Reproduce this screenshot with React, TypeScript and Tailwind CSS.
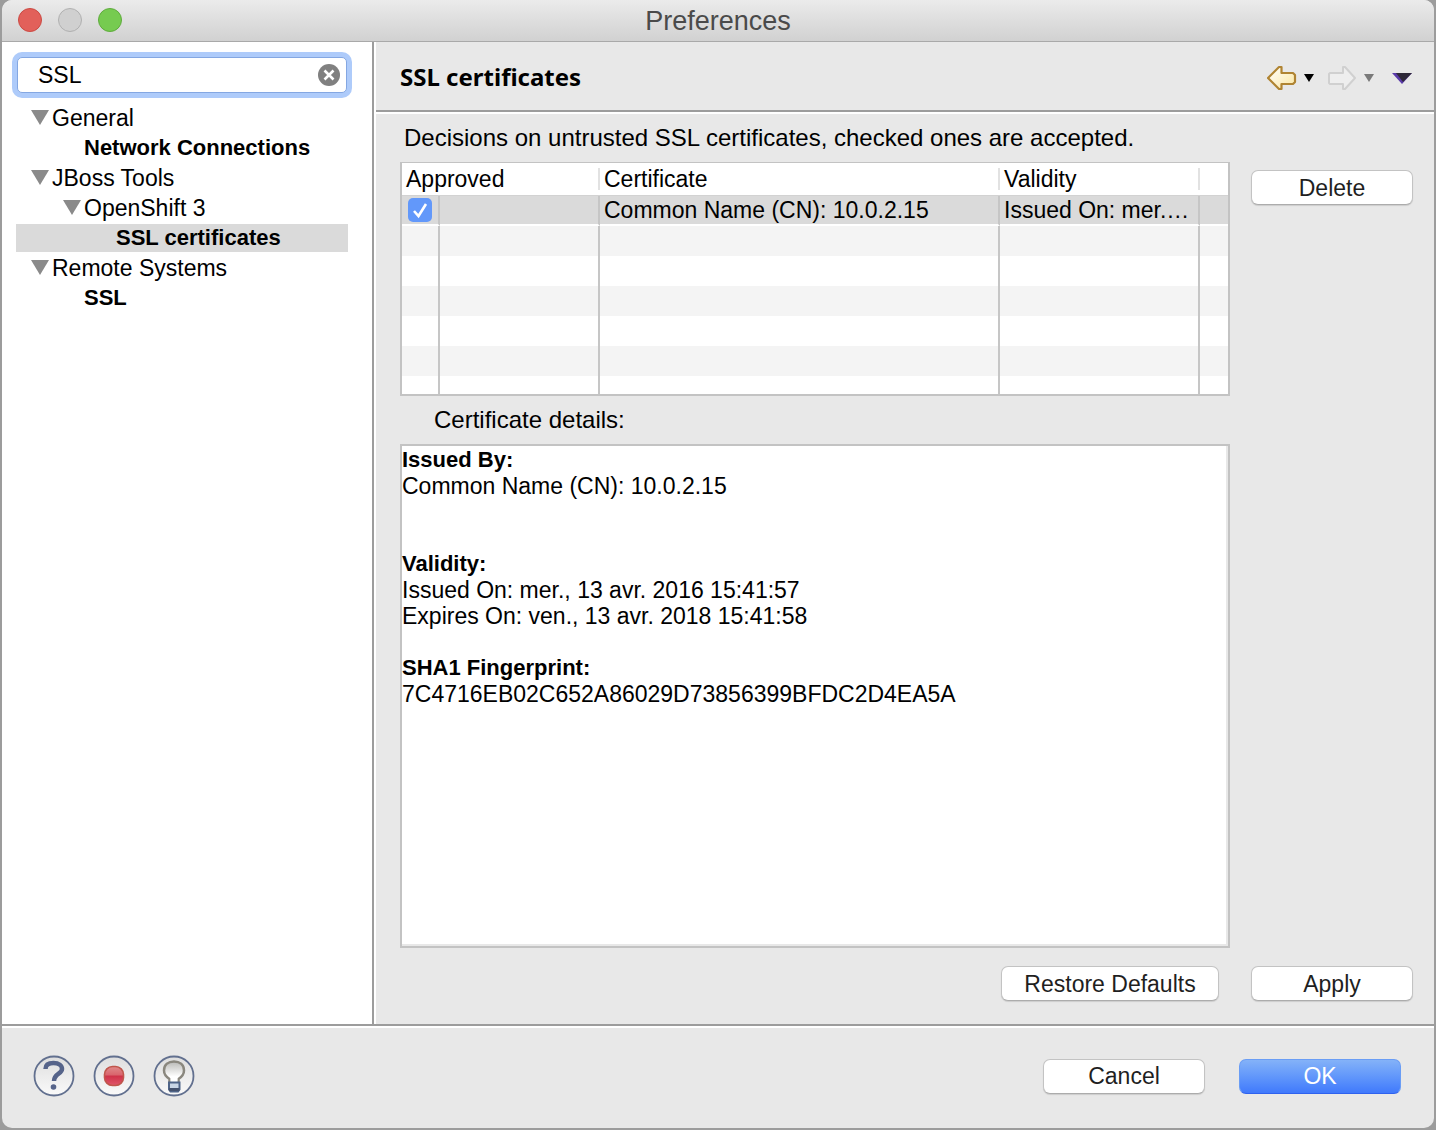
import type { ReactNode } from "react";

type TreeRow = { label: string; level: 0 | 1 | 2; branch?: boolean; selected?: boolean };

const tree: TreeRow[] = [
  { label: "General", level: 0, branch: true },
  { label: "Network Connections", level: 1 },
  { label: "JBoss Tools", level: 0, branch: true },
  { label: "OpenShift 3", level: 1, branch: true },
  { label: "SSL certificates", level: 2, selected: true },
  { label: "Remote Systems", level: 0, branch: true },
  { label: "SSL", level: 1 },
];

const indent = ["pl-[15px]", "pl-[47px]", "pl-[79px]"];

function TreeItem({ row }: { row: TreeRow }) {
  return (
    <li role="treeitem" aria-selected={!!row.selected} className="h-[30px] py-px">
      <div
        className={`flex h-7 items-center ${indent[row.level]} ${row.selected ? "bg-[#dadada]" : ""}`}
      >
        <span className="w-[21px] shrink-0">
          {row.branch && (
            <svg width="18" height="16" viewBox="0 0 18 16" className="block" aria-hidden="true">
              <path d="M0 0H18L9 15Z" fill="#8a8a8a" />
            </svg>
          )}
        </span>
        <span className={row.branch ? "" : "text-[22px] font-bold"}>{row.label}</span>
      </div>
    </li>
  );
}

function PushButton({ children, className = "" }: { children: ReactNode; className?: string }) {
  return (
    <button
      type="button"
      className={`h-[35px] rounded-[7px] border border-[#c3c3c3] border-b-[#acacac] bg-white text-[#1f1f1f] shadow-[0_1px_1px_rgba(0,0,0,0.12)] ${className}`}
    >
      {children}
    </button>
  );
}

function SmallTriangle({ color }: { color: string }) {
  return (
    <svg width="10" height="8" viewBox="0 0 10 8" className="block" aria-hidden="true">
      <path d="M0 0H10L5 8Z" fill={color} />
    </svg>
  );
}

function RoundIcon({ label, children }: { label: string; children?: ReactNode }) {
  return (
    <button type="button" aria-label={label} className="block">
      <svg width="42" height="42" viewBox="0 0 42 42" className="block">
        <defs>
          <linearGradient id="disc" x1="0" y1="0" x2="0" y2="1">
            <stop offset="0" stopColor="#dedede" />
            <stop offset="1" stopColor="#fafafa" />
          </linearGradient>
          <linearGradient id="rec" x1="0" y1="0" x2="0" y2="1">
            <stop offset="0" stopColor="#e08a8a" />
            <stop offset="0.45" stopColor="#d9646c" />
            <stop offset="0.5" stopColor="#cf3248" />
            <stop offset="1" stopColor="#e0566a" />
          </linearGradient>
          <linearGradient id="bulb" x1="0" y1="0" x2="0" y2="1">
            <stop offset="0" stopColor="#b9b9b6" />
            <stop offset="0.7" stopColor="#ffffff" />
          </linearGradient>
        </defs>
        <circle cx="21" cy="21" r="19.5" fill="url(#disc)" stroke="#62708f" strokeWidth="1.8" />
        {children}
      </svg>
    </button>
  );
}

export default function App() {
  return (
    <div className="min-h-screen bg-[#9c9c9c] px-[2px] pb-[2px] font-['Liberation_Sans',Arial,sans-serif] text-[23px] leading-[26px] text-black">
      <div className="flex min-h-[calc(100vh-2px)] flex-col overflow-hidden rounded-[10px] bg-[#e8e8e8]">
        <header className="grid h-[42px] grid-cols-[1fr_auto_1fr] items-center border-b border-[#a9a9a9] bg-linear-to-b from-[#ebebeb] to-[#d1d1d1] px-4">
          <div className="-mt-px flex gap-4">
            <button type="button" aria-label="Close" className="size-6 rounded-full border border-[#cb4a43] bg-[#e2605a]" />
            <button type="button" aria-label="Minimize" className="size-6 rounded-full border border-[#b0b0b0] bg-[#d0d0d0]" />
            <button type="button" aria-label="Zoom" className="size-6 rounded-full border border-[#5fab3d] bg-[#76cb50]" />
          </div>
          <h1 className="text-[27px] text-[#4a4a4a]">Preferences</h1>
        </header>

        <div className="flex flex-1">
          <nav className="w-[372px] shrink-0 border-r-2 border-[#9c9c9c] bg-white px-[14px] pt-[15px]">
            <div className="mx-px flex h-9 w-[330px] items-center rounded-[5px] border border-[#84a7e2] bg-white pr-1.5 pl-5 shadow-[0_0_0_5px_#aecbfa]">
              <input
                type="text"
                aria-label="Filter preferences"
                defaultValue="SSL"
                className="min-w-0 flex-1 bg-transparent outline-none"
              />
              <button type="button" aria-label="Clear filter">
                <svg width="22" height="22" viewBox="0 0 22 22" className="block">
                  <circle cx="11" cy="11" r="11" fill="#808080" />
                  <path d="M6.5 6.5L15.5 15.5M15.5 6.5L6.5 15.5" stroke="#fff" strokeWidth="2.6" />
                </svg>
              </button>
            </div>
            <ul role="tree" className="mt-[10px] w-[332px]">
              {tree.map((row) => (
                <TreeItem key={row.label + row.level} row={row} />
              ))}
            </ul>
          </nav>

          <main className="flex min-w-0 flex-1 flex-col border-l-2 border-white">
            <div className="flex h-[70px] shrink-0 items-center justify-between border-b-2 border-[#9c9c9c] pt-0.5 pr-[22px] pl-6">
              <h2 className="font-['Noto_Sans',sans-serif] text-2xl font-bold">SSL certificates</h2>
              <div className="flex items-center pt-0.5">
                <button type="button" aria-label="Back">
                  <svg width="30" height="26" viewBox="0 0 30 26" className="block">
                    <defs>
                      <linearGradient id="back" x1="0" y1="0" x2="1" y2="1">
                        <stop offset="0" stopColor="#ffffff" />
                        <stop offset="1" stopColor="#fbe6a0" />
                      </linearGradient>
                    </defs>
                    <path d="M1 13L12 2H14.500V8H26L28 10V17L26 19H14.500V24H12Z" fill="url(#back)" stroke="#b08432" strokeWidth="2.200" strokeLinejoin="round" />
                  </svg>
                </button>
                <button type="button" aria-label="Back history" className="ml-[7px]">
                  <SmallTriangle color="#000" />
                </button>
                <button type="button" aria-label="Forward" className="ml-[13px]">
                  <svg width="30" height="26" viewBox="0 0 30 26" className="block">
                    <path d="M28 13L18 2H16V8H3L2 9V18L3 19H16V24H18Z" fill="#eeeeee" stroke="#d0d0d0" strokeWidth="2" strokeLinejoin="round" />
                  </svg>
                </button>
                <button type="button" aria-label="Forward history" className="ml-[7px]">
                  <SmallTriangle color="#7a7a7a" />
                </button>
                <button type="button" aria-label="View menu" className="ml-[18px]">
                  <svg width="20" height="11" viewBox="0 0 20 11" className="block">
                    <path d="M0 0H20L10 11Z" fill="#5a3aa8" />
                    <path d="M4 0H20L11 9Z" fill="#2e2838" />
                  </svg>
                </button>
              </div>
            </div>

            <div className="flex flex-1 flex-col border-t-2 border-white pr-[21px] pb-[23px] pl-6">
              <p className="mt-[11px] pl-1 text-2xl leading-[26px]">
                Decisions on untrusted SSL certificates, checked ones are accepted.
              </p>
              <div className="mt-[11px] flex items-start gap-[21px]">
                <div className="h-[234px] min-w-0 flex-1 overflow-hidden border-2 border-t border-[#c3c3c3] bg-white">
                  <table className="w-full table-fixed border-collapse text-left">
                    <colgroup>
                      <col className="w-[38px]" />
                      <col className="w-[160px]" />
                      <col />
                      <col className="w-[200px]" />
                      <col className="w-[28px]" />
                    </colgroup>
                    <thead>
                      <tr className="h-8 border-b border-[#d2d2d2]">
                        {["Approved", "Certificate", "Validity"].map((title, i) => (
                          <th key={title} colSpan={i === 0 ? 2 : 1} className="p-0 font-normal">
                            <div className="h-[22px] border-r-2 border-[#e2e2e2] pl-1 leading-[22px]">{title}</div>
                          </th>
                        ))}
                        <td />
                      </tr>
                    </thead>
                    <tbody>
                      <tr className="h-[30px]">
                        <td className="p-0">
                          <div className="flex h-[30px] items-center border-r-2 border-b-2 border-r-[#c6c6c6] border-b-white bg-[#dadada] pl-[6px]">
                            <label className="relative block size-6">
                              <input
                                type="checkbox"
                                defaultChecked
                                aria-label="Approved"
                                className="block size-6 appearance-none rounded-[5px] bg-[#6298fa]"
                              />
                              <svg width="24" height="24" viewBox="0 0 24 24" className="pointer-events-none absolute inset-0">
                                <path d="M6 13L10.500 18L18 6" fill="none" stroke="#fff" strokeWidth="2.600" />
                              </svg>
                            </label>
                          </div>
                        </td>
                        {["", "Common Name (CN): 10.0.2.15", "Issued On: mer.…"].map((text, i) => (
                          <td key={i} className="p-0">
                            <div className="h-[30px] border-r-2 border-b-2 border-r-[#c6c6c6] border-b-white bg-[#dadada] pl-1 leading-[28px] whitespace-nowrap">
                              {text}
                            </div>
                          </td>
                        ))}
                        <td className="p-0">
                          <div className="h-[30px] border-b-2 border-white bg-[#dadada]" />
                        </td>
                      </tr>
                      {[0, 1, 2, 3, 4, 5].map((n) => (
                        <tr key={n} className="h-[30px] odd:bg-white even:bg-[#f4f4f4]">
                          {[0, 1, 2, 3].map((c) => (
                            <td key={c} className="p-0">
                              <div className="h-[30px] border-r-2 border-[#c6c6c6]" />
                            </td>
                          ))}
                          <td />
                        </tr>
                      ))}
                    </tbody>
                  </table>
                </div>
                <PushButton className="mt-2 w-[162px]">Delete</PushButton>
              </div>

              <h3 className="mt-[11px] pl-[34px] text-2xl leading-[26px]">Certificate details:</h3>
              <div className="mt-[11px] mr-[183px] flex-1 border-2 border-[#c3c3c3] bg-white">
                <div className="h-full border-r-2 border-b-2 border-[#e8e8e8] pt-px">
                  <p className="text-[22px] leading-[26px] font-bold">Issued By:</p>
                  <p>Common Name (CN): 10.0.2.15</p>
                  <p className="mt-[52px] text-[22px] leading-[26px] font-bold">Validity:</p>
                  <p>Issued On: mer., 13 avr. 2016 15:41:57</p>
                  <p>Expires On: ven., 13 avr. 2018 15:41:58</p>
                  <p className="mt-[26px] text-[22px] leading-[26px] font-bold">SHA1 Fingerprint:</p>
                  <p>7C4716EB02C652A86029D73856399BFDC2D4EA5A</p>
                </div>
              </div>
              <div className="mt-[18px] flex justify-end gap-8">
                <PushButton className="w-[218px]">Restore Defaults</PushButton>
                <PushButton className="w-[162px]">Apply</PushButton>
              </div>
            </div>
          </main>
        </div>

        <footer className="flex h-[104px] shrink-0 items-center justify-between border-t-2 border-[#9c9c9c] pr-[33px] pb-0.5 pl-[31px] shadow-[inset_0_2px_0_white]">
          <div className="flex gap-[18px]">
            <RoundIcon label="Help">
              <path d="M12.500 14C12.500 9.500 16 8 20.500 8C26 8 29 10.500 29 14C29 19 21 18.500 21 26" fill="none" stroke="#56648a" strokeWidth="4.500" />
              <circle cx="20.500" cy="32" r="2.800" fill="#56648a" />
            </RoundIcon>
            <RoundIcon label="Record">
              <rect x="11.500" y="11.500" width="19" height="19" rx="8" fill="url(#rec)" stroke="#c0564c" strokeWidth="1.600" />
            </RoundIcon>
            <RoundIcon label="Tips">
              <path d="M16.500 28V24C13.500 22 11 19.500 11 15.500C11 9.500 15.500 6.500 21 6.500C26.500 6.500 31 9.500 31 15.500C31 19.500 28.500 22 25.500 24V28Z" fill="url(#bulb)" stroke="#8a877e" strokeWidth="2.500" />
              <path d="M17.500 21H24.500V28H17.500Z" fill="#ffffff" />
              <path d="M16 27.500H26.500V34.500L25 36.500H17.500L16 34.500Z" fill="#c9d6e6" stroke="#4f6488" strokeWidth="2" />
              <path d="M16 33H26.500V36H16Z" fill="#44526e" />
            </RoundIcon>
          </div>
          <div className="flex gap-[34px]">
            <PushButton className="w-[162px]">Cancel</PushButton>
            <button
              type="button"
              className="h-[35px] w-[162px] rounded-[7px] border border-[#6a9df5] border-b-[#2f62ee] bg-linear-to-b from-[#84b2f8] to-[#4079fc] text-white"
            >
              OK
            </button>
          </div>
        </footer>
      </div>
    </div>
  );
}
